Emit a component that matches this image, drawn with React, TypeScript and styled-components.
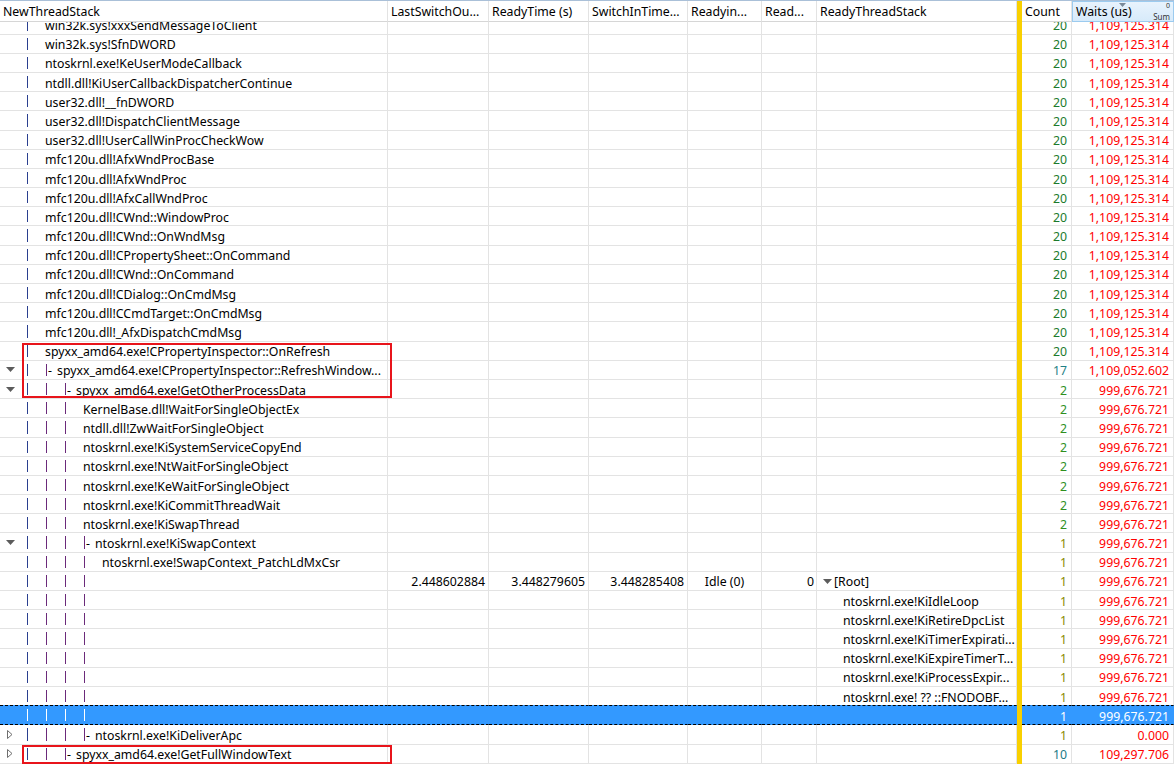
import React from 'react';
import styled, { createGlobalStyle, css } from 'styled-components';

const COLS = '388px 101px 100px 99px 74px 55px 200px 5px 50px 102px';
const ROW_H = 19.2;
const GRID = '#e3e3e3';
const FONT = '"Noto Sans", "Liberation Sans", sans-serif';

const Global = createGlobalStyle`
  html, body { margin: 0; padding: 0; background: #fff; }
  body { font-family: ${FONT}; font-size: 12.3px; color: #000; overflow: hidden; }
  * { box-sizing: border-box; }
`;

const Frame = styled.div`
  width: 1174px;
  height: 765px;
  overflow: hidden;
  display: flex;
  flex-direction: column;
  background: #fff;
`;

const Header = styled.div`
  display: grid;
  grid-template-columns: ${COLS};
  height: 22px;
  flex: none;
  border-top: 1px solid #aac0d8;
`;

const HeadCell = styled.div<{ $align?: string }>`
  position: relative;
  display: flex;
  align-items: center;
  justify-content: ${(p) => p.$align || 'flex-start'};
  padding: 1px 3px 0;
  border-right: 1px solid ${GRID};
  border-bottom: 1px solid #d6d6d6;
  white-space: nowrap;
  overflow: hidden;
  background: #fff;
`;

const HeadLabel = styled.span`
  line-height: 14px;
`;

const YellowHead = styled.div`
  background: #f9d000;
`;

const SortedHead = styled(HeadCell)`
  background: linear-gradient(#e8f3fd, #d7eafa);
  border: 1px solid #9ccbef;
  padding-left: 3px;
`;

const SortArrow = styled.svg`
  position: absolute;
  top: 1px;
  left: 46px;
`;

const TinyTop = styled.span`
  position: absolute;
  top: 0;
  right: 3px;
  font-size: 7px;
  line-height: 7px;
  color: #333;
`;

const TinyBottom = styled.span`
  position: absolute;
  bottom: 0;
  right: 3px;
  font-size: 8px;
  line-height: 8px;
  color: #333;
`;

const CountDots = styled.span`
  position: absolute;
  bottom: 0;
  right: 1px;
  font-size: 8px;
  line-height: 5px;
  color: #333;
`;

const Body = styled.div`
  flex: 1;
  overflow: hidden;
  position: relative;
`;

const RowList = styled.div`
  margin-top: -6.6px;
`;

const Group = styled.div<{ $mark?: boolean; $inset?: number }>`
  position: relative;
  ${(p) =>
    p.$mark &&
    css`
      &::after {
        content: '';
        position: absolute;
        left: 22px;
        width: 366px;
        top: ${p.$inset}px;
        bottom: ${p.$inset}px;
        border: 2px solid #e8141b;
        pointer-events: none;
      }
    `}
`;

const RowBox = styled.div<{ $sel?: boolean }>`
  display: grid;
  grid-template-columns: ${COLS};
  height: ${ROW_H}px;
  ${(p) =>
    p.$sel &&
    css`
      height: ${ROW_H + 1}px;
      margin-top: -1px;
    `}
`;

const Cell = styled.div<{ $sel?: boolean; $align?: string; $pl?: number; $pr?: number; $color?: string }>`
  display: flex;
  align-items: center;
  justify-content: ${(p) => p.$align || 'flex-start'};
  padding-top: 2px;
  padding-left: ${(p) => p.$pl ?? 3}px;
  padding-right: ${(p) => p.$pr ?? 3}px;
  border-right: 1px solid ${GRID};
  border-bottom: 1px solid ${GRID};
  white-space: nowrap;
  overflow: hidden;
  color: ${(p) => p.$color || '#000'};
  ${(p) =>
    p.$sel &&
    css`
      background: #3399ff;
      color: #fff;
      border-right-color: #3399ff;
      border-top: 1px dashed #000;
      border-bottom: 1px dashed #000;
    `}
`;

const TreeCell = styled(Cell)`
  padding-top: 0;
`;

const TreeText = styled.span`
  padding-top: 2px;
`;

const YellowCell = styled.div`
  background: #f9d000;
`;

const Expander = styled.span`
  width: 22px;
  flex: none;
  display: flex;
  align-items: center;
  justify-content: center;
  padding-right: 2px;
`;

const Guide = styled.span<{ $sel?: boolean; $c: string }>`
  position: relative;
  width: 19px;
  height: 100%;
  flex: none;
  &::before {
    content: '';
    position: absolute;
    left: 5px;
    top: 3px;
    bottom: 3px;
    width: 1px;
    background: ${(p) => (p.$sel ? '#fff' : p.$c)};
  }
`;

const Junction = styled.span<{ $c: string }>`
  position: relative;
  flex: none;
  width: 16px;
  height: 100%;
  display: flex;
  align-items: center;
  padding-left: 7px;
  padding-top: 2px;
  &::before {
    content: '';
    position: absolute;
    left: 5px;
    top: 3px;
    bottom: 3px;
    width: 1px;
    background: ${(p) => p.$c};
  }
`;

const Name = styled(TreeText)`
  padding-left: 4px;
`;

const ReadyText = styled.span<{ $indent: number }>`
  padding-left: ${(p) => p.$indent}px;
  display: flex;
  align-items: center;
  gap: 2px;
`;

const DownTri = () => (
  <svg width="9" height="5" viewBox="0 0 9 5">
    <path d="M0 0 H9 L4.5 5 Z" fill="#5c5c5c" />
  </svg>
);

const RightTri = () => (
  <svg width="6" height="9" viewBox="0 0 6 9">
    <path d="M0.5 0.5 L5 4.5 L0.5 8.5 Z" fill="#fff" stroke="#6e6e6e" strokeWidth="1" />
  </svg>
);

const guideColor = (i: number) => (i === 0 ? '#2a3f8f' : '#6b2a7a');

type Row = {
  g: number;
  j?: boolean;
  t?: string;
  exp?: 'open' | 'closed';
  c: number;
  w: string;
  sel?: boolean;
  nums?: [string, string, string, string, string];
  ready?: { text: string; root?: boolean };
};

const countColor = (c: number) => {
  if (c >= 20) return '#1c7a2c';
  if (c >= 17) return '#1f7f86';
  if (c >= 10) return '#217a86';
  if (c >= 2) return '#2f8f1f';
  return '#8a8a00';
};

const W1 = '1,109,125.314';
const W3 = '999,676.721';

const top: string[] = [
  'win32k.sys!xxxSendMessageToClient',
  'win32k.sys!SfnDWORD',
  'ntoskrnl.exe!KeUserModeCallback',
  'ntdll.dll!KiUserCallbackDispatcherContinue',
  'user32.dll!__fnDWORD',
  'user32.dll!DispatchClientMessage',
  'user32.dll!UserCallWinProcCheckWow',
  'mfc120u.dll!AfxWndProcBase',
  'mfc120u.dll!AfxWndProc',
  'mfc120u.dll!AfxCallWndProc',
  'mfc120u.dll!CWnd::WindowProc',
  'mfc120u.dll!CWnd::OnWndMsg',
  'mfc120u.dll!CPropertySheet::OnCommand',
  'mfc120u.dll!CWnd::OnCommand',
  'mfc120u.dll!CDialog::OnCmdMsg',
  'mfc120u.dll!CCmdTarget::OnCmdMsg',
  'mfc120u.dll!_AfxDispatchCmdMsg',
];

const groupA: Row[] = top.map((t) => ({ g: 1, t, c: 20, w: W1 }));

const groupB: Row[] = [
  { g: 1, t: 'spyxx_amd64.exe!CPropertyInspector::OnRefresh', c: 20, w: W1 },
  { g: 1, j: true, exp: 'open', t: 'spyxx_amd64.exe!CPropertyInspector::RefreshWindow...', c: 17, w: '1,109,052.602' },
  { g: 2, j: true, exp: 'open', t: 'spyxx_amd64.exe!GetOtherProcessData', c: 2, w: W3 },
];

const groupC: Row[] = [
  { g: 3, t: 'KernelBase.dll!WaitForSingleObjectEx', c: 2, w: W3 },
  { g: 3, t: 'ntdll.dll!ZwWaitForSingleObject', c: 2, w: W3 },
  { g: 3, t: 'ntoskrnl.exe!KiSystemServiceCopyEnd', c: 2, w: W3 },
  { g: 3, t: 'ntoskrnl.exe!NtWaitForSingleObject', c: 2, w: W3 },
  { g: 3, t: 'ntoskrnl.exe!KeWaitForSingleObject', c: 2, w: W3 },
  { g: 3, t: 'ntoskrnl.exe!KiCommitThreadWait', c: 2, w: W3 },
  { g: 3, t: 'ntoskrnl.exe!KiSwapThread', c: 2, w: W3 },
  { g: 3, j: true, exp: 'open', t: 'ntoskrnl.exe!KiSwapContext', c: 1, w: W3 },
  { g: 4, t: 'ntoskrnl.exe!SwapContext_PatchLdMxCsr', c: 1, w: W3 },
  {
    g: 4,
    c: 1,
    w: W3,
    nums: ['2.448602884', '3.448279605', '3.448285408', 'Idle (0)', '0'],
    ready: { text: '[Root]', root: true },
  },
  { g: 4, c: 1, w: W3, ready: { text: 'ntoskrnl.exe!KiIdleLoop' } },
  { g: 4, c: 1, w: W3, ready: { text: 'ntoskrnl.exe!KiRetireDpcList' } },
  { g: 4, c: 1, w: W3, ready: { text: 'ntoskrnl.exe!KiTimerExpirati...' } },
  { g: 4, c: 1, w: W3, ready: { text: 'ntoskrnl.exe!KiExpireTimerT...' } },
  { g: 4, c: 1, w: W3, ready: { text: 'ntoskrnl.exe!KiProcessExpir...' } },
  { g: 4, c: 1, w: W3, ready: { text: 'ntoskrnl.exe! ?? ::FNODOBF...' } },
  { g: 4, c: 1, w: W3, sel: true },
  { g: 3, j: true, exp: 'closed', t: 'ntoskrnl.exe!KiDeliverApc', c: 1, w: '0.000' },
];

const groupD: Row[] = [
  { g: 2, j: true, exp: 'closed', t: 'spyxx_amd64.exe!GetFullWindowText', c: 10, w: '109,297.706' },
];

const TreeRow: React.FC<{ r: Row }> = ({ r }) => {
  const s = r.sel;
  const n = r.nums;
  return (
    <RowBox $sel={s}>
      <TreeCell $sel={s} $pl={0}>
        <Expander>{r.exp === 'open' ? <DownTri /> : r.exp === 'closed' ? <RightTri /> : null}</Expander>
        {Array.from({ length: r.g }).map((_, i) => (
          <Guide key={i} $c={guideColor(i)} $sel={s} />
        ))}
        {r.j ? (
          <>
            <Junction $c={guideColor(r.g)}>-</Junction>
            <TreeText>{r.t}</TreeText>
          </>
        ) : r.t ? (
          <Name>{r.t}</Name>
        ) : null}
      </TreeCell>
      <Cell $sel={s} $align="flex-end">{n?.[0]}</Cell>
      <Cell $sel={s} $align="flex-end">{n?.[1]}</Cell>
      <Cell $sel={s} $align="flex-end">{n?.[2]}</Cell>
      <Cell $sel={s} $align="center">{n?.[3]}</Cell>
      <Cell $sel={s} $align="flex-end" $pr={2}>{n?.[4]}</Cell>
      <Cell $sel={s} $pl={0}>
        {r.ready &&
          (r.ready.root ? (
            <ReadyText $indent={6}>
              <DownTri />
              <span>{r.ready.text}</span>
            </ReadyText>
          ) : (
            <ReadyText $indent={26}>{r.ready.text}</ReadyText>
          ))}
      </Cell>
      <YellowCell />
      <Cell $sel={s} $align="flex-end" $pr={4} $color={countColor(r.c)}>
        {r.c}
      </Cell>
      <Cell $sel={s} $align="flex-end" $pr={4} $color="#ff0000">
        {r.w}
      </Cell>
    </RowBox>
  );
};

const Rows: React.FC<{ rows: Row[] }> = ({ rows }) => (
  <>
    {rows.map((r, i) => (
      <TreeRow key={i} r={r} />
    ))}
  </>
);

export default function App() {
  return (
    <Frame>
      <Global />
      <Header>
        <HeadCell><HeadLabel>NewThreadStack</HeadLabel></HeadCell>
        <HeadCell><HeadLabel>LastSwitchOu...</HeadLabel></HeadCell>
        <HeadCell><HeadLabel>ReadyTime (s)</HeadLabel></HeadCell>
        <HeadCell><HeadLabel>SwitchInTime...</HeadLabel></HeadCell>
        <HeadCell><HeadLabel>Readyin...</HeadLabel></HeadCell>
        <HeadCell><HeadLabel>Read...</HeadLabel></HeadCell>
        <HeadCell><HeadLabel>ReadyThreadStack</HeadLabel></HeadCell>
        <YellowHead />
        <HeadCell>
          <HeadLabel>Count</HeadLabel>
          <CountDots>...</CountDots>
        </HeadCell>
        <SortedHead>
          <HeadLabel>Waits (us)</HeadLabel>
          <SortArrow width="7" height="4" viewBox="0 0 7 4">
            <path d="M0 0 H7 L3.5 4 Z" fill="#7a8a9a" />
          </SortArrow>
          <TinyTop>0</TinyTop>
          <TinyBottom>Sum</TinyBottom>
        </SortedHead>
      </Header>
      <Body>
        <RowList>
          <Group>
            <Rows rows={groupA} />
          </Group>
          <Group $mark $inset={1}>
            <Rows rows={groupB} />
          </Group>
          <Group>
            <Rows rows={groupC} />
          </Group>
          <Group $mark $inset={0}>
            <Rows rows={groupD} />
          </Group>
        </RowList>
      </Body>
    </Frame>
  );
}
